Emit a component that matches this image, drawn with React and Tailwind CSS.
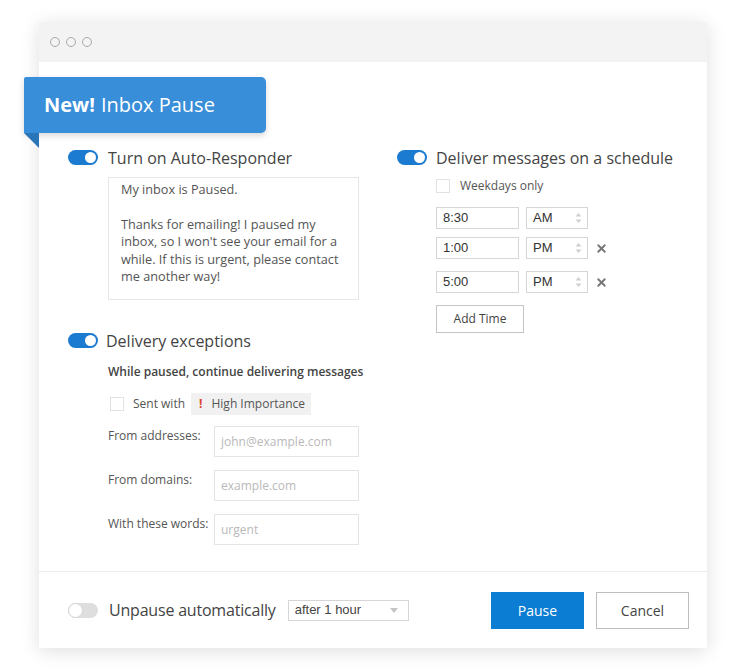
import { X } from 'lucide-react';

const sans = { fontFamily: '"Open Sans", "Noto Sans", sans-serif' };
const arial = { fontFamily: '"Liberation Sans", Arial, sans-serif' };

function Toggle({ on = true }) {
  return on ? (
    <div className="relative w-[30px] h-[15px] rounded-full bg-[#1b7bd0] shrink-0">
      <div className="absolute right-[2px] top-[2px] w-[11px] h-[11px] rounded-full bg-white" />
    </div>
  ) : (
    <div className="relative w-[30px] h-[15px] rounded-full bg-[#dedede] shrink-0">
      <div className="absolute left-0 top-0 w-[15px] h-[15px] rounded-full bg-white border border-[#d4d4d4]" />
    </div>
  );
}

function Checkbox() {
  return <div className="w-[14px] h-[14px] border border-[#e2e2e2] bg-white shrink-0" />;
}

function Spinner() {
  return (
    <svg width="7" height="12" viewBox="0 0 7 12" className="shrink-0">
      <path d="M0.5 4.5 L3.5 1 L6.5 4.5 Z" fill="#d0d0d0" />
      <path d="M0.5 7.5 L3.5 11 L6.5 7.5 Z" fill="#d0d0d0" />
    </svg>
  );
}

function TimeRow({ time, period, removable, className = '' }) {
  return (
    <div className={`flex items-center ${className}`} style={arial}>
      <div className="w-[83px] h-[22px] border border-[#d6d6d6] flex items-center pl-[6px] text-[13px] text-[#333]">{time}</div>
      <div className="ml-[7px] w-[62px] h-[22px] border border-[#d6d6d6] flex items-center justify-between pl-[6px] pr-[5px] text-[13px] text-[#333]">
        {period}
        <Spinner />
      </div>
      {removable && <X size={13} strokeWidth={3.5} className="ml-[7px] text-[#777]" />}
    </div>
  );
}

function FieldRow({ label, placeholder, className = '' }) {
  return (
    <div className={`flex items-start ${className}`}>
      <div className="w-[106px] text-[12px] text-[#555] pt-[1px]">{label}</div>
      <div className="w-[145px] h-[31px] border border-[#e4e4e4] flex items-center pl-[6px] text-[12px] text-[#b9b9b9]">{placeholder}</div>
    </div>
  );
}

export default function App() {
  return (
    <div className="w-[732px] h-[672px] bg-white pt-[22px] pl-[39px]" style={sans}>
      <div className="relative w-[668px] h-[626px] bg-white shadow-[0_3px_18px_rgba(0,0,0,0.13)] flex flex-col">
        {/* title bar */}
        <div className="h-[40px] bg-[#f3f3f3] flex items-center gap-[6px] pl-[11px] shrink-0">
          <div className="w-[10px] h-[10px] rounded-full border-[1.5px] border-[#a9a9a9]" />
          <div className="w-[10px] h-[10px] rounded-full border-[1.5px] border-[#a9a9a9]" />
          <div className="w-[10px] h-[10px] rounded-full border-[1.5px] border-[#a9a9a9]" />
        </div>

        {/* ribbon */}
        <div className="absolute left-[-15px] top-[55px]">
          <div className="w-[242px] h-[56px] bg-[#388ed9] rounded-tr-[5px] rounded-br-[5px] rounded-tl-[2px] shadow-[0_3px_6px_rgba(0,0,0,0.15)] flex items-center pl-[20px] text-[20px] text-white">
            <span className="font-bold">New!</span>
            <span className="ml-[6px]">Inbox Pause</span>
          </div>
          <svg width="15" height="15" viewBox="0 0 15 15" className="block">
            <path d="M0 0 L15 0 L15 15 Z" fill="#2a74b8" />
          </svg>
        </div>

        {/* body */}
        <div className="flex-1 grid grid-cols-[329px_1fr] pt-[88px] pl-[29px]">
          {/* left column */}
          <div>
            <div className="flex items-center h-[15px]">
              <Toggle />
              <span className="ml-[10px] text-[16px] text-[#444] leading-none">Turn on Auto-Responder</span>
            </div>
            <div className="ml-[40px] mt-[12px] w-[251px] h-[123px] border border-[#e6e6e6] pl-[12px] pr-[11px] pt-[3px] text-[12.7px] leading-[17.4px] text-[#555]">
              My inbox is Paused.
              <br />
              <br />
              Thanks for emailing! I paused my inbox, so I won't see your email for a while. If this is urgent, please contact me another way!
            </div>

            <div className="flex items-center h-[15px] mt-[33px]">
              <Toggle />
              <span className="ml-[8px] text-[16px] text-[#444] leading-none">Delivery exceptions</span>
            </div>
            <div className="ml-[40px] mt-[15px] text-[12px] font-semibold text-[#444]">While paused, continue delivering messages</div>
            <div className="ml-[42px] mt-[12px] flex items-center">
              <Checkbox />
              <span className="ml-[9px] text-[12px] text-[#555]">Sent with</span>
              <span className="ml-[6px] h-[22px] w-[120px] bg-[#f1f1f1] flex items-center pl-[8px] text-[12px] text-[#555]">
                <span className="text-[#e0452f] font-bold">!</span>
                <span className="ml-[9px]">High Importance</span>
              </span>
            </div>
            <FieldRow className="ml-[40px] mt-[11px]" label="From addresses:" placeholder="john@example.com" />
            <FieldRow className="ml-[40px] mt-[13px]" label="From domains:" placeholder="example.com" />
            <FieldRow className="ml-[40px] mt-[13px]" label="With these words:" placeholder="urgent" />
          </div>

          {/* right column */}
          <div>
            <div className="flex items-center h-[15px]">
              <Toggle />
              <span className="ml-[9px] text-[16px] text-[#444] leading-none">Deliver messages on a schedule</span>
            </div>
            <div className="ml-[39px] mt-[12px] flex items-center">
              <Checkbox />
              <span className="ml-[10px] text-[12px] text-[#555]">Weekdays only</span>
            </div>
            <TimeRow className="ml-[39px] mt-[12px]" time="8:30" period="AM" />
            <TimeRow className="ml-[39px] mt-[8px]" time="1:00" period="PM" removable />
            <TimeRow className="ml-[39px] mt-[12px]" time="5:00" period="PM" removable />
            <div className="ml-[39px] mt-[12px] w-[88px] h-[28px] border border-[#c4c4c4] flex items-center justify-center text-[12px] text-[#444]">
              Add Time
            </div>
          </div>
        </div>

        {/* footer */}
        <div className="h-[77px] border-t border-[#ececec] flex items-center pl-[29px] pr-[18px] shrink-0">
          <Toggle on={false} />
          <span className="ml-[11px] text-[16px] text-[#444] tracking-[-0.2px]">Unpause automatically</span>
          <div className="ml-[12px] w-[121px] h-[21px] border border-[#d6d6d6] flex items-center justify-between pl-[6px] pr-[10px] text-[13px] text-[#444]" style={arial}>
            after 1 hour
            <svg width="8" height="5" viewBox="0 0 8 5"><path d="M0 0 L8 0 L4 5 Z" fill="#c4c4c4" /></svg>
          </div>
          <div className="flex-1" />
          <div className="w-[93px] h-[37px] bg-[#0b7dd3] text-white text-[14px] flex items-center justify-center">Pause</div>
          <div className="ml-[12px] w-[93px] h-[37px] border border-[#bdbdbd] text-[#444] text-[14px] flex items-center justify-center">Cancel</div>
        </div>
      </div>
    </div>
  );
}
